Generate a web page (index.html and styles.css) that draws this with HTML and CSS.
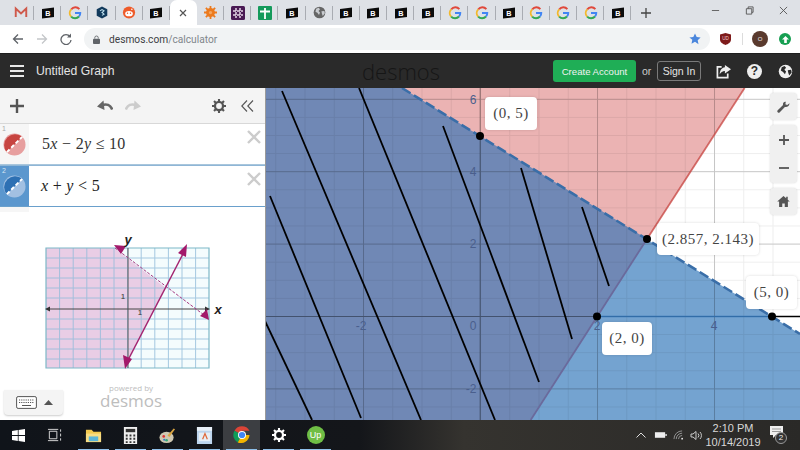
FILE: index.html
```html
<!DOCTYPE html>
<html lang="en">
<head>
<meta charset="utf-8">
<title>Desmos</title>
<link rel="stylesheet" href="styles.css">
</head>
<body>
<svg class="defs" aria-hidden="true">
  <symbol id="i-b" viewBox="0 0 16 14"><path d="M1 2.4 15 .6v11.2L1 13.4z" fill="#0b0b0b"/><text x="8" y="10.4" text-anchor="middle" class="b-letter">B</text></symbol>
  <symbol id="i-g" viewBox="0 0 16 16">
    <path d="M13 3.6A6 6 0 0 0 3.7 3.8" fill="none" stroke="#e0493b" stroke-width="2.2"/>
    <path d="M3.7 3.8a6 6 0 0 0-.1 8.3" fill="none" stroke="#f3b92c" stroke-width="2.2"/>
    <path d="M3.6 12.1A6 6 0 0 0 12.6 12" fill="none" stroke="#33a853" stroke-width="2.2"/>
    <path d="M12.6 12A6 6 0 0 0 14 8H8" fill="none" stroke="#4285f4" stroke-width="2.2"/>
  </symbol>
  <symbol id="i-home" viewBox="0 0 16 14"><path d="M8 0 0 7h2.4v7h4V9.4h3.2V14h4V7H16l-2.6-2.3V1h-2v2z" fill="#555"/></symbol>
  <symbol id="i-gear" viewBox="0 0 16 16"><circle cx="8" cy="8" r="4.6" fill="none" stroke="currentColor" stroke-width="2.6"/><path d="M8 0v3M8 13v3M0 8h3M13 8h3M2.3 2.3l2.2 2.2M11.5 11.5l2.2 2.2M13.7 2.3l-2.2 2.2M4.5 11.5l-2.2 2.2" stroke="currentColor" stroke-width="2.4"/></symbol>
  <symbol id="i-globe" viewBox="0 0 16 16"><circle cx="8" cy="8" r="7.2" fill="currentColor"/><path d="M4 3.4 7 2.2 8.6 4 6.8 6.2 8.6 8 7.4 11 5.4 8.4 3 7zM10.4 6.6l3.6-.6.6 3-2.6 3.2-1-2.6z" fill="var(--globe-land,#222)"/></symbol>
</svg>

<div class="app">
  <div class="tabs">
    <div class="tab"><svg class="ico16" viewBox="0 0 16 14"><path d="M2 12V2.5L8 8l6-5.5V12" fill="none" stroke="#cf5a4c" stroke-width="2.2"/></svg></div>
    <div class="tab"><svg class="ico-b"><use href="#i-b"/></svg></div>
    <div class="tab"><svg class="ico14"><use href="#i-g"/></svg></div>
    <div class="tab"><svg class="ico16" viewBox="0 0 16 16"><path d="M8 .5 14.5 4v8L8 15.5 1.5 12V4z" fill="#123a5c"/><path d="M5.5 6 8 4.5 10.5 6 8 8l2.5 2L8 11.5" fill="none" stroke="#bfe0ee" stroke-width="1.3"/></svg></div>
    <div class="tab"><svg class="ico16" viewBox="0 0 16 16"><circle cx="8" cy="8" r="7.5" fill="#ee5b2a"/><ellipse cx="8" cy="9.5" rx="4.7" ry="3.2" fill="#fff"/><circle cx="6.2" cy="9" r=".9" fill="#ee5b2a"/><circle cx="9.8" cy="9" r=".9" fill="#ee5b2a"/><circle cx="11.5" cy="4" r="1" fill="#fff"/></svg></div>
    <div class="tab"><svg class="ico-b"><use href="#i-b"/></svg></div>
    <div class="tab tab-active"><svg class="ico-x" viewBox="0 0 8 8"><path d="M1 1l6 6M7 1 1 7" stroke="#555" stroke-width="1.2"/></svg></div>
    <div class="tab"><svg class="ico13" viewBox="0 0 16 16"><path d="M8 0v16M0 8h16M2.3 2.3l11.4 11.4M13.7 2.3 2.3 13.7" stroke="#ec7a1d" stroke-width="2.2"/><circle cx="8" cy="8" r="5.5" fill="#ec7a1d"/><circle cx="8" cy="8" r="2" fill="#f4a65f"/></svg></div>
    <div class="tab"><svg class="ico14" viewBox="0 0 14 14"><rect width="14" height="14" rx="1.5" fill="#4a1a54"/><path d="M5 2v10M9 2v10M2 5h10M2 9h10" stroke="#e3d5e5" stroke-width="1.5" stroke-dasharray="3 1"/></svg></div>
    <div class="tab"><svg class="ico14" viewBox="0 0 14 14"><rect width="14" height="14" rx="1" fill="#159a5b"/><path d="M7 2v11M2 5.5h10" stroke="#fff" stroke-width="1.8"/></svg></div>
    <div class="tab"><svg class="ico-b"><use href="#i-b"/></svg></div>
    <div class="tab tab-globe"><svg class="ico13"><use href="#i-globe"/></svg></div>
    <div class="tab"><svg class="ico-b"><use href="#i-b"/></svg></div>
    <div class="tab"><svg class="ico-b"><use href="#i-b"/></svg></div>
    <div class="tab"><svg class="ico-b"><use href="#i-b"/></svg></div>
    <div class="tab"><svg class="ico-b"><use href="#i-b"/></svg></div>
    <div class="tab"><svg class="ico14"><use href="#i-g"/></svg></div>
    <div class="tab"><svg class="ico14"><use href="#i-g"/></svg></div>
    <div class="tab"><svg class="ico-b"><use href="#i-b"/></svg></div>
    <div class="tab"><svg class="ico14"><use href="#i-g"/></svg></div>
    <div class="tab"><svg class="ico14"><use href="#i-g"/></svg></div>
    <div class="tab"><svg class="ico14"><use href="#i-g"/></svg></div>
    <div class="tab"><svg class="ico-b"><use href="#i-b"/></svg></div>
    <svg class="tab-plus" viewBox="0 0 10 10"><path d="M5 0v10M0 5h10" stroke="#444" stroke-width="1.3"/></svg>
    <div class="win-controls">
      <svg class="win-ico" viewBox="0 0 10 10"><path d="M1 5h8" stroke="#666" stroke-width="1.1"/></svg>
      <svg class="win-ico" viewBox="0 0 10 10"><path d="M1.5 3h6v6h-6zM3.5 3V1H9v6H7.5" fill="none" stroke="#555"/></svg>
      <svg class="win-ico" viewBox="0 0 10 10"><path d="M1 1l8 8M9 1 1 9" stroke="#555" stroke-width="1"/></svg>
    </div>
  </div>

  <div class="toolbar">
    <svg class="nav-ico" viewBox="0 0 12 12"><path d="M11 6H2M6 1.500 1.500 6 6 10.500" fill="none" stroke="#5f6368" stroke-width="1.3"/></svg>
    <svg class="nav-ico" viewBox="0 0 12 12"><path d="M1 6h9M6 1.500 10.500 6 6 10.500" fill="none" stroke="#c4c6c9" stroke-width="1.3"/></svg>
    <svg class="nav-ico" viewBox="0 0 12 12"><path d="M10 3.500A5 5 0 1 0 11 7" fill="none" stroke="#5f6368" stroke-width="1.3"/><path d="M11 .5v4H7z" fill="#5f6368"/></svg>
    <div class="omnibox">
      <svg class="lock" viewBox="0 0 8 10"><path d="M2 4V3a2 2 0 0 1 4 0v1" fill="none" stroke="#5f6368"/><rect y="4" width="8" height="6" rx="1" fill="#5f6368"/></svg>
      <span class="url-host">desmos.com</span><span class="url-path">/calculator</span>
      <svg class="star" viewBox="0 0 12 12"><path d="m6 .5 1.7 3.6 3.9.5-2.9 2.7.8 3.9L6 8.800l-3.500 1.900.8-3.900L.4 4.600l3.900-.5z" fill="#4a86dc"/></svg>
    </div>
    <svg class="shield" viewBox="0 0 12 13"><path d="M6 0 12 1.500V7c0 3-3 5-6 6-3-1-6-3-6-6V1.500z" fill="#7e1b1b"/><text x="6" y="8" text-anchor="middle" class="ub-text">UD</text></svg>
    <span class="tool-sep"></span>
    <span class="avatar">O</span>
    <span class="ext-green"><svg viewBox="0 0 8 8" class="ext-arrow"><path d="M4 0 8 4H5.500v4h-3V4H0z" fill="#fff"/></svg></span>
  </div>

  <header class="dhead">
    <svg class="burger" viewBox="0 0 14 12"><path d="M0 1h14M0 6h14M0 11h14" stroke="#e8e8e8" stroke-width="2"/></svg>
    <span class="title">Untitled Graph</span>
    <span class="brand">desmos</span>
    <span class="btn-create">Create Account</span>
    <span class="or">or</span>
    <span class="btn-signin">Sign In</span>
    <svg class="head-ico" viewBox="0 0 16 16"><path d="M6 3H1.500v11.500h11V10" fill="none" stroke="#eee" stroke-width="1.8"/><path d="M9.500 1 16 5.500 9.500 10V7.500C7 7.500 5 9 4 11c0-4 2-7 5.500-7.500z" fill="#eee"/></svg>
    <span class="help">?</span>
    <svg class="head-ico head-globe"><use href="#i-globe"/></svg>
  </header>

  <main class="main">
    <aside class="panel">
      <div class="ptools">
        <svg class="pt-plus" viewBox="0 0 14 14"><path d="M7 0v14M0 7h14" stroke="#555" stroke-width="2.4"/></svg>
        <div class="undo-group">
          <svg class="pt-undo" viewBox="0 0 16 11"><path d="M15.200 9.500C13.500 5 9.500 3.500 5 5.200" fill="none" stroke="#666" stroke-width="2.6"/><path d="M6.500 .5 0 6.500l7.500 3.500z" fill="#666"/></svg>
          <svg class="pt-undo" viewBox="0 0 16 11"><path d="M.8 9.500C2.500 5 6.500 3.500 11 5.200" fill="none" stroke="#ccc" stroke-width="2.6"/><path d="M9.500 .5 16 6.500 8.500 10z" fill="#ccc"/></svg>
        </div>
        <svg class="pt-gear"><use href="#i-gear"/></svg>
        <svg class="pt-coll" viewBox="0 0 13 12"><path d="M6 .5.800 6 6 11.500M12 .5 6.800 6l5.200 5.500" fill="none" stroke="#555" stroke-width="1.1"/></svg>
      </div>

      <div class="expr">
        <div class="expr-tab"><span class="expr-num">1</span>
          <svg class="swatch" viewBox="0 0 24 24"><circle cx="12" cy="12" r="11.500" fill="#e79f9f"/><path d="M3.900 20.100A11.500 11.500 0 0 1 20.100 3.900z" fill="#c74440"/><path d="M4 20 20 4" stroke="#fff" stroke-width="2" stroke-dasharray="4 2.500"/></svg>
        </div>
        <div class="expr-math"><span>5<i>x</i> − 2<i>y</i> ≤ 10</span></div>
        <svg class="expr-x" viewBox="0 0 14 14"><path d="M1 1l12 12M13 1 1 13" stroke="#ccc" stroke-width="2.4"/></svg>
      </div>
      <div class="expr expr-sel">
        <div class="expr-tab"><span class="expr-num">2</span>
          <svg class="swatch" viewBox="0 0 24 24"><circle cx="12" cy="12" r="11.500" fill="#a2c0e2"/><path d="M3.900 20.100A11.500 11.500 0 0 1 20.100 3.900z" fill="#2d70b3"/><path d="M4 20 20 4" stroke="#fff" stroke-width="2" stroke-dasharray="4 2.500"/></svg>
        </div>
        <div class="expr-math"><span><i>x</i> + <i>y</i> &lt; 5</span></div>
        <svg class="expr-x" viewBox="0 0 14 14"><path d="M1 1l12 12M13 1 1 13" stroke="#ccc" stroke-width="2.4"/></svg>
      </div>
      <div class="expr-stub"></div>

      <div class="figure">
        <svg class="fig-svg" viewBox="0 -6 190 146">
          <rect x="6" y="11" width="163" height="120" fill="#f4fcfd"/>
          <path d="M6 11h68l52 40-41 80H6z" fill="#e9cde5"/>
          <path d="M19.600 11v120M33.200 11v120M46.800 11v120M60.400 11v120M74 11v120M87.600 11v120M101.200 11v120M114.800 11v120M128.400 11v120M142 11v120M155.600 11v120M6 21h163M6 31h163M6 41h163M6 51h163M6 61h163M6 82h163M6 92h163M6 102h163M6 112h163M6 122h163" stroke="#92bcda" stroke-width="1" opacity=".8"/>
          <path d="M6 11v120h163V11z" fill="none" stroke="#7db8c7" stroke-width="1.2"/>
          <path d="M8 72h160" stroke="#444" stroke-width="1"/>
          <path d="M88 11v120" stroke="#555" stroke-width="1"/>
          <path d="m5 72 5-2.500v5zM170 72l-5-2.500v5z" fill="#333"/>
          <path d="M75 11 168 81" stroke="#a63a83" stroke-width="1" stroke-dasharray="3 1.500"/>
          <path d="M87 125 145 13" stroke="#a3246f" stroke-width="1.4"/>
          <path d="m74 8 12 1-5 8zM169 83l-2-11-7 7zM147 7l-1 13-8-4zM85 132l-2-14 9 4z" fill="#a3196b"/>
          <text x="88" y="7" text-anchor="middle" class="fig-var">y</text>
          <text x="178" y="77" text-anchor="middle" class="fig-var">x</text>
          <text x="83" y="62" text-anchor="middle" class="fig-num">1</text>
          <text x="100" y="78" text-anchor="middle" class="fig-num">1</text>
        </svg>
      </div>

      <div class="pfoot">
        <div class="kbd-btn">
          <svg class="kbd-ico" viewBox="0 0 21 13"><rect x=".6" y=".6" width="19.800" height="11.800" rx="1.500" fill="#fff" stroke="#555"/><path d="M3 4h15M3 6.500h15" stroke="#555" stroke-dasharray="1.200 1"/><path d="M6 9.500h9" stroke="#555"/></svg>
          <svg class="kbd-caret" viewBox="0 0 9 5"><path d="M4.500 0 9 5H0z" fill="#555"/></svg>
        </div>
        <div class="powered"><span class="pow-small">powered by</span><span class="pow-big">desmos</span></div>
      </div>
    </aside>

    <section class="graph">
      <svg class="plot" viewBox="266 88 534 332">
        <defs>
          <pattern id="minor" patternUnits="userSpaceOnUse" x="480" y="316" width="29.250" height="18.100"><path d="M.5 0v18.100M0 .5h29.250" stroke="#000" stroke-opacity=".065" stroke-width="1" fill="none"/></pattern>
          <pattern id="major" patternUnits="userSpaceOnUse" x="480" y="316" width="117" height="72.400"><path d="M.5 0v72.400M0 .5h117" stroke="#000" stroke-opacity=".17" stroke-width="1" fill="none"/></pattern>
        </defs>
        <rect x="266" y="88" width="534" height="332" fill="#fff"/>
        <path d="M266 88H744.600L530.700 420H266z" fill="#ebb3b3"/>
        <path d="M402 88 800 334V420H266V88z" fill="#74a3d0"/>
        <path d="M402 88 647 239 530.700 420H266V88z" fill="#7088b5"/>
        <rect x="266" y="88" width="534" height="332" fill="url(#minor)"/>
        <rect x="266" y="88" width="534" height="332" fill="url(#major)"/>
        <path d="M266 316.500H800M480 88V420" stroke="#000" stroke-opacity=".22" stroke-width="1.2"/>
        <path d="M597 316.500H772" stroke="#2d70b3" stroke-opacity=".8" stroke-width="1.5"/>
        <path d="M772 316.500H800" stroke="#000" stroke-width="1.5"/>
        <path d="M744.600 88 647 239" stroke="#c74440" stroke-opacity=".75" stroke-width="1.8"/>
        <path d="M647 239 530.700 420" stroke="#6a6a9c" stroke-width="1.8"/>
        <path d="M402 88 800 334" stroke="#3a6ea8" stroke-width="2.6" stroke-dasharray="10 4"/>
        <g class="ink">
          <path d="M282 91 421 420"/>
          <path d="M359 88 495 420"/>
          <path d="M270 196 361 418"/>
          <path d="M265 321 312 420"/>
          <path d="M443 126 539 382"/>
          <path d="M521 168 572 339"/>
          <path d="M582 207 609 286"/>
        </g>
        <g class="ticks">
          <text x="473" y="104">6</text><text x="473" y="176">4</text><text x="473" y="248">2</text>
          <text x="473" y="330">0</text><text x="361" y="330">-2</text><text x="597" y="330">2</text>
          <text x="714" y="330">4</text><text x="471" y="393">-2</text>
        </g>
        <circle cx="480" cy="136" r="4"/><circle cx="647" cy="239" r="4"/><circle cx="597" cy="316.500" r="4"/><circle cx="772" cy="316.500" r="4"/>
      </svg>

      <div class="pt-label pl-a">(0, 5)</div>
      <div class="pt-label pl-b">(2.857, 2.143)</div>
      <div class="pt-label pl-c">(2, 0)</div>
      <div class="pt-label pl-d">(5, 0)</div>

      <div class="gcontrols">
        <div class="gbtn"><svg class="g-wrench" viewBox="0 0 14 14"><path d="M13.500 3.500 11 5.500 9 4.500l.5-2.500C7.500 1.500 6 3 6.500 5.500L.8 11a1.500 1.500 0 0 0 2.200 2.200L8.500 7.500c2.500.5 5-1 5-4z" fill="#555"/></svg></div>
        <div class="gbtn gbtn-zoom">
          <svg class="g-pm" viewBox="0 0 10 10"><path d="M5 0v10M0 5h10" stroke="#555" stroke-width="1.8"/></svg>
          <svg class="g-pm" viewBox="0 0 10 10"><path d="M0 5h10" stroke="#555" stroke-width="1.8"/></svg>
        </div>
        <div class="gbtn"><svg class="g-home"><use href="#i-home"/></svg></div>
      </div>
    </section>
  </main>

  <footer class="taskbar">
    <div class="tb-slot tb-start"><svg class="tb-win" viewBox="0 0 13 13"><path d="M0 2 5.800 1v5H0zM6.600.9 13 0v6H6.600zM0 7h5.800v5L0 11.100zM6.600 7H13v6l-6.400-.9z" fill="#fff"/></svg></div>
    <div class="tb-slot tb-taskview"><svg class="tb-view" viewBox="0 0 16 14"><path d="M2.500 3h8v8h-8zM1 1h11M1 13h11M14.500 1v2.500M14.500 5.500v3M14.500 10.500V13" fill="none" stroke="#ddd"/></svg></div>
    <div class="tb-slot tb-run"><svg class="tb-app" viewBox="0 0 18 16"><path d="M1 2h6l2 2h8v11H1z" fill="#f2c94f"/><rect x="1" y="6" width="16" height="9" fill="#f7dd83"/><rect x="4" y="9" width="10" height="5" fill="#5bb5d8"/></svg></div>
    <div class="tb-slot tb-run"><svg class="tb-app" viewBox="0 0 14 18"><rect width="14" height="18" fill="#eee"/><rect x="2" y="2" width="10" height="3.500" fill="#333"/><path d="M2 8h2v2H2zM6 8h2v2H6zM10 8h2v2h-2zM2 11.500h2v2H2zM6 11.500h2v2H6zM10 11.500h2v2h-2zM2 15h2v2H2zM6 15h2v2H6zM10 15h2v2h-2z" fill="#333"/></svg></div>
    <div class="tb-slot tb-run"><svg class="tb-app" viewBox="0 0 18 18"><ellipse cx="8" cy="11" rx="7.500" ry="6" fill="#cfc7b0"/><circle cx="5" cy="10" r="1.400" fill="#d33"/><circle cx="8" cy="14" r="1.400" fill="#3a7"/><circle cx="5.500" cy="13.500" r="1.100" fill="#37c"/><path d="M9 9 15.500 1.500l1.500 1L11 10.500z" fill="#d9a441"/></svg></div>
    <div class="tb-slot tb-run"><svg class="tb-app" viewBox="0 0 16 18"><rect width="16" height="18" fill="#bcd5ee"/><rect y="0" width="16" height="4" fill="#e8f0f8"/><rect x="2" y="6" width="12" height="9" fill="#e6eef5"/><path d="M6 13 8.500 7 11 13" fill="none" stroke="#e0693a" stroke-width="1.3"/></svg></div>
    <div class="tb-slot tb-run tb-active"><svg class="tb-chrome" viewBox="0 0 18 18"><path d="M9 9 1.500 4.700A8.600 8.600 0 0 1 16.500 4.700H9z" fill="#db4437"/><path d="M9 9 4.700 16.500A8.600 8.600 0 0 1 1.500 4.700z" fill="#0f9d58"/><path d="M9 9h7.500A8.600 8.600 0 0 1 4.700 16.500z" fill="#f4b400"/><circle cx="9" cy="9" r="4" fill="#fff"/><circle cx="9" cy="9" r="3.100" fill="#4285f4"/></svg></div>
    <div class="tb-slot tb-run tb-gear"><svg class="tb-app"><use href="#i-gear"/></svg></div>
    <div class="tb-slot tb-run"><span class="tb-up">Up</span></div>
    <div class="tray">
      <svg class="tray-caret" viewBox="0 0 10 6"><path d="M.5 5.500 5 1l4.500 4.500" fill="none" stroke="#ddd"/></svg>
      <svg class="tray-batt" viewBox="0 0 14 8"><path d="M1 1h11v6H1z" fill="#eee"/><path d="M12 3h2v2h-2z" fill="#bbb"/></svg>
      <svg class="tray-wifi" viewBox="0 0 12 11"><path d="M1 10a9 9 0 0 1 9-9M3.500 10A6.500 6.500 0 0 1 10 3.500M6 10a4 4 0 0 1 4-4" fill="none" stroke="#999"/><circle cx="10" cy="9.500" r="1" fill="#eee"/></svg>
      <svg class="tray-vol" viewBox="0 0 12 11"><path d="M1 4h2l3-2.500v8L3 7H1zM8 3.500a3 3 0 0 1 0 4M10 2a5 5 0 0 1 0 7" fill="none" stroke="#ccc"/></svg>
      <div class="clock"><span>2:10 PM</span><span>10/14/2019</span></div>
      <div class="notif">
        <svg class="notif-ico" viewBox="0 0 13 12"><path d="M0 0h13v9H6l-3 3V9H0z" fill="#eee"/><path d="M2 3h9M2 5.500h9" stroke="#999"/></svg>
        <span class="notif-badge">2</span>
      </div>
    </div>
  </footer>
</div>
</body>
</html>
```
FILE: styles.css
```css
* { box-sizing: border-box; }
html, body { margin: 0; padding: 0; }
body { width: 800px; height: 450px; overflow: hidden; font-family: "Liberation Sans", Arial, sans-serif; background: #fff; }
.defs { display: none; }
svg { display: block; flex: none; }
.b-letter { font: bold 8.5px "Liberation Sans", sans-serif; fill: #fff; }
.app { width: 800px; height: 450px; display: flex; flex-direction: column; }

/* tab strip */
.tabs { height: 25px; flex: none; display: flex; align-items: stretch; padding-left: 7px; background: #dee1e6; }
.tab { width: 27.15px; flex: none; display: flex; align-items: center; justify-content: center; position: relative; }
.tab::after { content: ""; position: absolute; right: 0; top: 6px; height: 14px; width: 1px; background: #a9acb2; }
.tab-active { background: #fff; border-radius: 7px 7px 0 0; }
.tab-active::after { display: none; }
.ico-b { width: 14px; height: 12px; }
.ico14 { width: 14px; height: 14px; }
.ico16 { width: 14px; height: 13px; }
.ico13 { width: 13px; height: 13px; }
.ico-x { width: 8px; height: 8px; }
.tab-globe { color: #666; --globe-land: #c9ccd0; }
.tab-plus { width: 10px; height: 10px; margin: 8px 0 0 10px; }
.win-controls { margin-left: auto; display: flex; gap: 25px; padding: 6px 12px 0 0; }
.win-ico { width: 9px; height: 9px; }

/* toolbar */
.toolbar { height: 28px; flex: none; display: flex; align-items: center; padding-left: 12px; gap: 12px; background: #fff; }
.nav-ico { width: 12px; height: 12px; }
.omnibox { width: 626px; height: 22px; display: flex; align-items: center; padding-left: 9px; border-radius: 11px; background: #f1f3f4; font-size: 10.2px; font-family: Roboto, sans-serif; }
.lock { width: 7px; height: 9px; margin-right: 9px; }
.url-host { color: #3c4043; }
.url-path { color: #80868b; }
.star { width: 12px; height: 12px; margin-left: auto; margin-right: 9px; }
.shield { width: 11px; height: 12px; margin-left: -2px; }
.ub-text { font: 5px "Liberation Sans", sans-serif; fill: #f3d0d0; }
.tool-sep { width: 1px; height: 12px; background: #dcdcdc; margin-left: -1px; }
.avatar { width: 16px; height: 16px; margin-left: -3px; border-radius: 50%; background: #5a3a2e; color: #eee; font-size: 6px; display: flex; align-items: center; justify-content: center; }
.ext-green { width: 12px; height: 12px; margin-left: -1px; border-radius: 50%; background: #179f52; display: flex; align-items: center; justify-content: center; }
.ext-arrow { width: 7px; height: 7px; }

/* desmos header */
.dhead { height: 35px; flex: none; display: flex; align-items: center; position: relative; padding-left: 10px; background: #2a2a2a; color: #e4e4e4; border-top: 1px solid #1e1e1e; }
.burger { width: 14px; height: 12px; }
.title { margin-left: 12px; font-size: 12.2px; }
.brand { position: absolute; left: 362px; top: 2px; font: 300 22px/30px "Open Sans", sans-serif; color: #161616; }
.btn-create { margin-left: auto; width: 83px; height: 22px; border-radius: 3px; background: #1fae56; color: #f2f2f2; font-size: 9.6px; display: flex; align-items: center; justify-content: center; }
.or { margin-left: 6px; width: 15px; font-size: 10.5px; color: #ccc; }
.btn-signin { width: 44px; height: 20px; border: 1px solid #7a7a7a; border-radius: 3px; font-size: 10.5px; display: flex; align-items: center; justify-content: center; margin-right: 15px; }
.head-ico { width: 15px; height: 15px; }
.help { width: 15px; height: 15px; margin: 0 16px; border-radius: 50%; background: #eee; color: #2a2a2a; font: bold 12px/15px "Liberation Sans", sans-serif; text-align: center; }
.head-globe { color: #eee; --globe-land: #2a2a2a; margin-right: 7px; }

/* layout */
.main { flex: 1; min-height: 0; display: flex; }
.panel { width: 266px; flex: none; display: flex; flex-direction: column; background: #fff; border-right: 1px solid #9a9a9a; }
.ptools { height: 36px; flex: none; display: flex; align-items: center; padding-left: 10px; background: #f4f4f4; border-bottom: 1px solid #d8d8d8; }
.pt-plus { width: 14px; height: 14px; }
.undo-group { display: flex; gap: 12px; margin-left: 73px; }
.pt-undo { width: 16px; height: 11px; }
.pt-gear { width: 14px; height: 14px; margin-left: 71px; color: #555; }
.pt-coll { width: 13px; height: 12px; margin-left: 15px; }
.expr { height: 41px; flex: none; display: flex; align-items: stretch; position: relative; border-bottom: 1px solid #a9c6dc; background: #fff; }
.expr-tab { width: 29px; flex: none; background: #f6f6f6; position: relative; display: flex; align-items: center; justify-content: center; }
.expr-num { position: absolute; left: 2px; top: 1px; font-size: 7px; color: #aaa; }
.swatch { width: 23px; height: 23px; margin-top: 1px; }
.expr-math { display: flex; align-items: center; padding-left: 13px; font: 16px "Liberation Serif", serif; color: #333; letter-spacing: .3px; }
.expr-x { position: absolute; right: 4px; top: 6px; width: 14px; height: 14px; }
.expr-sel { height: 42px; border-bottom-color: #6aa0cc; border-top: 1px solid #8fb6d6; }
.expr-sel .expr-tab { background: #5b97ce; }
.expr-sel .expr-num { color: #d8e6f3; }
.expr-sel .expr-math { padding-left: 12px; color: #222; }
.expr-stub { width: 29px; height: 5px; flex: none; background: #f6f6f6; }
.figure { height: 177px; flex: none; padding: 19px 0 0 40px; }
.fig-svg { width: 190px; height: 146px; }
.fig-var { font: italic bold 13px "Liberation Sans", sans-serif; fill: #222; }
.fig-num { font: bold 7px "Liberation Sans", sans-serif; fill: #555; }
.pfoot { flex: 1; display: flex; align-items: flex-start; }
.kbd-btn { width: 59px; height: 25px; margin: 1px 0 0 4px; display: flex; align-items: center; gap: 7px; padding-left: 12px; background: #f4f4f4; border-radius: 0 0 4px 4px; box-shadow: 0 1px 2px rgba(0,0,0,.2); }
.kbd-ico { width: 21px; height: 13px; }
.kbd-caret { width: 9px; height: 5px; }
.powered { display: flex; flex-direction: column; align-items: center; margin: -6px 0 0 37px; color: #bdbdbd; }
.pow-small { font: 8px/9px "Open Sans", sans-serif; }
.pow-big { font: 17px/17px "Open Sans", sans-serif; }

/* graph */
.graph { flex: 1; position: relative; overflow: hidden; }
.plot { width: 534px; height: 332px; }
.plot circle { fill: #000; }
.ink path { stroke: #000; stroke-width: 1.8; fill: none; }
.ticks text { font: 12px "Liberation Sans", sans-serif; fill: #4a5f8d; text-anchor: middle; }
.pt-label { position: absolute; display: flex; align-items: center; justify-content: center; height: 33px; background: #fff; border-radius: 4px; box-shadow: 0 0 3px rgba(0,0,0,.15); font: 15px "Liberation Serif", serif; color: #444; letter-spacing: .5px; }
.pl-a { left: 219px; top: 9px; width: 52px; }
.pl-b { left: 391px; top: 135px; width: 102px; height: 32px; }
.pl-c { left: 336px; top: 234px; width: 50px; }
.pl-d { left: 480px; top: 188px; width: 51px; }
.gcontrols { position: absolute; right: 3px; top: 5px; display: flex; flex-direction: column; gap: 5px; }
.gbtn { width: 27px; height: 27px; display: flex; align-items: center; justify-content: center; background: #f0f0f0; border-radius: 4px; box-shadow: 0 0 2px rgba(0,0,0,.15); }
.gbtn-zoom { height: 58px; flex-direction: column; gap: 18px; }
.g-wrench { width: 13px; height: 13px; }
.g-pm { width: 10px; height: 10px; }
.g-home { width: 13px; height: 11px; }

/* taskbar */
.taskbar { height: 30px; flex: none; display: flex; align-items: stretch; background: linear-gradient(90deg, #10141a 0%, #14161a 45%, #35332f 58%, #2a2927 100%); }
.tb-slot { width: 37px; flex: none; display: flex; align-items: center; justify-content: center; position: relative; }
.tb-start { width: 36px; }
.tb-taskview { margin-right: 2px; }
.tb-run::after { content: ""; position: absolute; left: 3px; right: 3px; bottom: 0; height: 1px; background: #8fc0ea; }
.tb-active { background: #3c3e42; }
.tb-win { width: 13px; height: 13px; }
.tb-view { width: 15px; height: 14px; }
.tb-app { width: 17px; height: 17px; }
.tb-chrome { width: 18px; height: 18px; }
.tb-gear { color: #fff; }
.tb-gear svg { width: 14px; height: 14px; }
.tb-up { width: 18px; height: 18px; border-radius: 50%; background: #6fbe45; color: #fff; font-size: 9px; display: flex; align-items: center; justify-content: center; }
.tray { margin-left: auto; display: flex; align-items: center; padding-right: 14px; }
.tray-caret { width: 10px; height: 6px; }
.tray-batt { width: 13px; height: 8px; margin-left: 7.5px; }
.tray-wifi { width: 11px; height: 10px; margin-left: 6px; }
.tray-vol { width: 12px; height: 11px; margin-left: 6.5px; }
.clock { width: 56px; margin-left: 3px; display: flex; flex-direction: column; align-items: center; font-size: 11px; line-height: 14px; color: #d8d8d8; }
.notif { margin-left: 9px; width: 16px; height: 20px; position: relative; }
.notif-ico { width: 13px; height: 12px; margin-top: 1px; }
.notif-badge { position: absolute; left: 5px; top: 7px; width: 12px; height: 12px; border-radius: 50%; background: #333; border: 1px solid #999; color: #eee; font-size: 8px; line-height: 10px; text-align: center; }
```
